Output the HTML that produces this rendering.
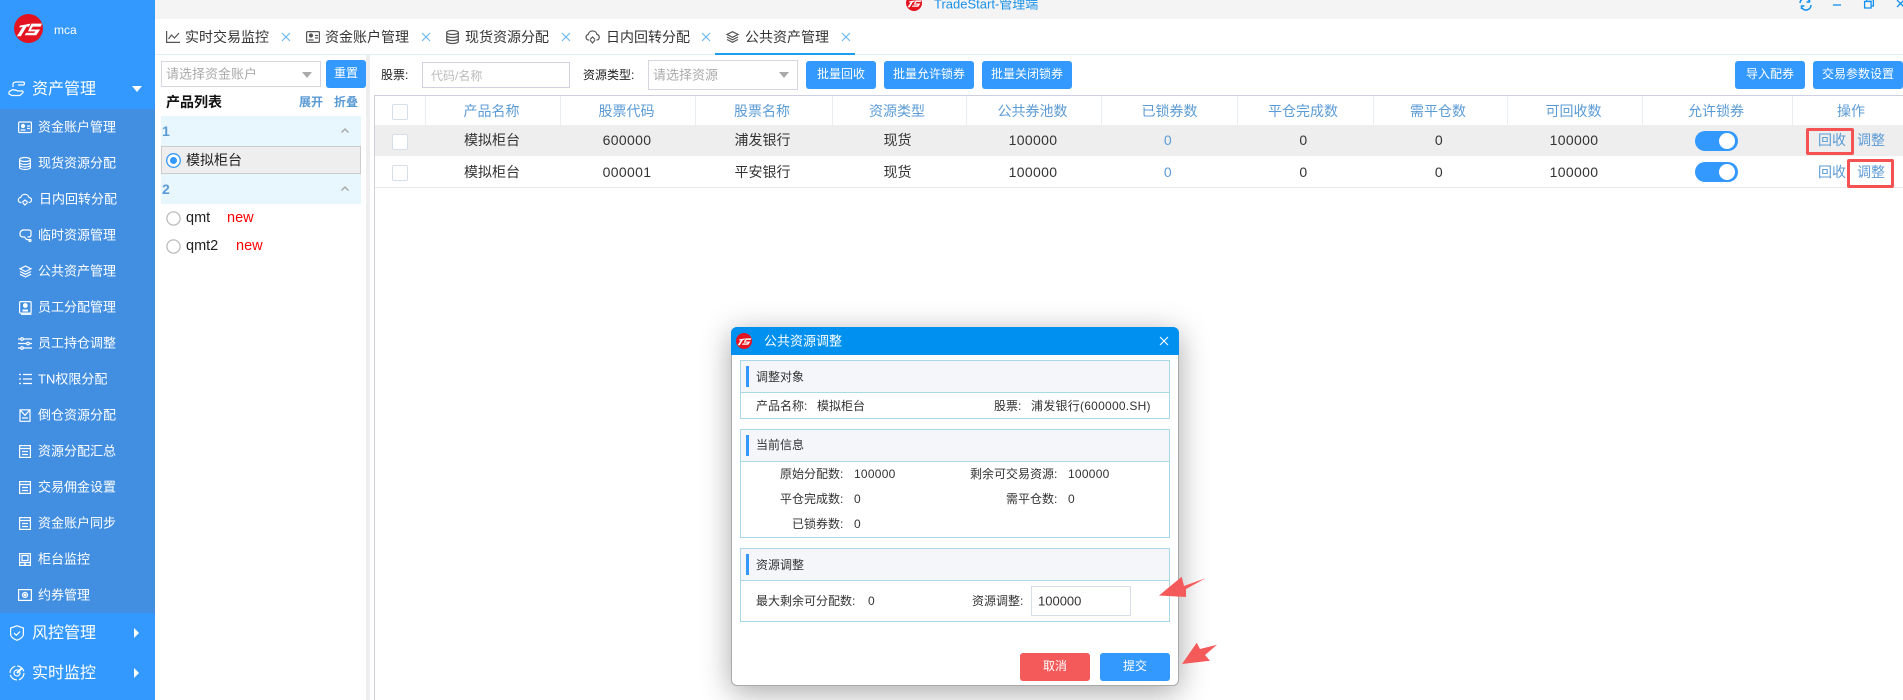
<!DOCTYPE html>
<html lang="zh"><head><meta charset="utf-8"><title>TradeStart-管理端</title>
<style>
*{box-sizing:border-box}
html,body{margin:0;padding:0;width:1903px;height:700px;overflow:hidden;background:#fff;font-family:"Liberation Sans","Noto Sans CJK SC",sans-serif;color:#333}
.a{position:absolute;white-space:nowrap}
.t{position:absolute;white-space:nowrap;transform:translateY(-50%);line-height:1}
svg{position:absolute;overflow:visible}
.sub{font-size:13px;color:#fff;left:38px}
.ms{fill:none;stroke:#fff;stroke-width:1.2}
.ts{fill:none;stroke:#555;stroke-width:1.2}
.tb{font-size:14px;color:#333}
.btn{position:absolute;background:#39f;border-radius:3px;color:#fff;font-size:12px;text-align:center;white-space:nowrap}
.th{position:absolute;top:96px;height:29px;line-height:31px;font-size:14px;color:#5b9bd5;text-align:center;border-right:1px solid #e9eef3}
.td{position:absolute;height:30px;line-height:30px;font-size:14px;color:#333;text-align:center}
.n{letter-spacing:.35px}
.cb{position:absolute;left:392px;width:16px;height:16px;background:#fff;border:1px solid #d5dfea;border-radius:2px}
.tg{position:absolute;left:1695px;width:43px;height:20px;border-radius:10px;background:#39f}
.tg i{position:absolute;right:3px;top:2px;width:16px;height:16px;border-radius:50%;background:#fff}
.sec{position:absolute;left:740px;width:430px;border:1px solid #a9d9e6;background:#fff}
.hd{position:absolute;left:0;top:0;width:428px;height:32px;background:#f4f6f9;border-bottom:1px solid #a9d9e6}
.bar{position:absolute;left:5px;top:5px;width:3px;height:21px;background:#39f}
.f12{font-size:12px;color:#333}
.d{letter-spacing:.25px}
</style></head><body>

<svg width="0" height="0" style="left:0;top:0"><defs><g id="logo"><circle cx="15" cy="15" r="15" fill="#e3141f"/><path d="M6 12 17 10 15.500 13H13L7 23H3L9 13.500 5.500 14zM18 10H29L27.500 13H19.500L17.500 16H27L23 22H11L12.500 19.500H21L22 18H14.500z" fill="#fff"/></g></defs></svg>

<!-- sidebar -->
<div class="a" style="left:0;top:0;width:155px;height:700px;background:#39f"></div>
<div class="a" style="left:0;top:109px;width:155px;height:504px;background:#428fe2"></div>
<svg style="left:14px;top:14px" width="29" height="29" viewBox="0 0 30 30"><use href="#logo"/></svg>
<div class="t" style="left:54px;top:30px;font-size:12px;color:#fff">mca</div>

<svg class="ms" style="left:8px;top:81px" width="18" height="16" viewBox="0 0 18 16"><path d="M5 6V3.500Q5 1 8 1h7q1.500 0 1.500 1.500T15 4H10M1 11q3-3 6-2l3 1h4q1.500 0 1 1.500l-3 3H4L1 13z"/></svg>
<div class="t" style="left:32px;top:90px;font-size:16px;color:#fff">资产管理</div>
<svg style="left:132px;top:86px" width="10" height="6"><path d="M0 0h10L5 6z" fill="#fff"/></svg>

<svg class="ms" style="left:18px;top:121px" width="14" height="13"><rect x=".6" y="1" width="12.800" height="10.500" rx="1"/><circle cx="5" cy="5" r="1.500" fill="#fff"/><path d="M2.500 9h5M9 5h3M9 7.500h3"/></svg>
<div class="t sub" style="top:127px">资金账户管理</div>
<svg class="ms" style="left:19px;top:157px" width="12" height="13"><ellipse cx="6" cy="2.500" rx="5.400" ry="2"/><path d="M.6 2.500v8c0 1 2.400 2 5.400 2s5.400-1 5.400-2v-8M.6 5.500c0 1 2.400 2 5.400 2s5.400-1 5.400-2M.6 8c0 1 2.400 2 5.400 2s5.400-1 5.400-2"/></svg>
<div class="t sub" style="top:163px">现货资源分配</div>
<svg class="ms" style="left:18px;top:193px" width="14" height="13"><path d="M3.500 9.500H3a2.500 2.500 0 0 1-.3-5A4.300 4.300 0 0 1 11 4.500a2.500 2.500 0 0 1 0 5h-.5M4.500 9l2.500-2 2.500 2M4.500 9.500 7 12l2.500-2.500"/></svg>
<div class="t sub" style="top:199px;left:39px">日内回转分配</div>
<svg class="ms" style="left:19px;top:229px" width="13" height="13"><path d="M3 1h7q2 0 2 2v3q0 2-2 2H8.500M5 1C2 1 1 3 1 5s1 3 3 3h1.500l2 2.500 3 .5"/><circle cx="11" cy="11.500" r="1"/></svg>
<div class="t sub" style="top:235px">临时资源管理</div>
<svg class="ms" style="left:19px;top:265px" width="13" height="13"><path d="M6.500 1 12 3.800 6.500 6.600 1 3.800zM1 6.500l5.500 2.800L12 6.500M1 9.200 6.500 12 12 9.200"/></svg>
<div class="t sub" style="top:271px">公共资产管理</div>
<svg class="ms" style="left:19px;top:301px" width="13" height="14"><rect x=".6" y=".6" width="11.500" height="11.500" rx="1"/><circle cx="6.300" cy="4.500" r="1.800" fill="#fff"/><path d="M3.500 9.500h5.500" stroke-width="2"/><path d="M2 13.300h10.500"/></svg>
<div class="t sub" style="top:307px">员工分配管理</div>
<svg class="ms" style="left:18px;top:337px" width="14" height="13"><path d="M0 2h14M0 6.500h14M0 11h14"/><circle cx="4" cy="2" r="1.300" fill="#428fe2"/><circle cx="10" cy="6.500" r="1.300" fill="#428fe2"/><circle cx="4" cy="11" r="1.300" fill="#428fe2"/></svg>
<div class="t sub" style="top:343px">员工持仓调整</div>
<svg class="ms" style="left:19px;top:373px" width="13" height="12"><path d="M4 1.500h9M4 6h9M4 10.500h9M0 1.500h2M0 6h2M0 10.500h2"/></svg>
<div class="t sub" style="top:379px">TN权限分配</div>
<svg class="ms" style="left:19px;top:409px" width="12" height="13"><path d="M1 .8h10v11.500H1zM1 .8l5 5.500 5-5.500M3 9h6"/></svg>
<div class="t sub" style="top:415px">倒仓资源分配</div>
<svg class="ms" style="left:19px;top:445px" width="12" height="13"><rect x=".6" y=".6" width="10.800" height="11.800"/><path d="M.6 3.500h10.800M3 6.500h6M3 9.500h6"/></svg>
<div class="t sub" style="top:451px">资源分配汇总</div>
<svg class="ms" style="left:19px;top:481px" width="12" height="13"><rect x=".6" y=".6" width="10.800" height="11.800"/><path d="M.6 3.500h10.800M3 6.500h6M3 9.500h6"/></svg>
<div class="t sub" style="top:487px">交易佣金设置</div>
<svg class="ms" style="left:19px;top:517px" width="12" height="13"><rect x=".6" y=".6" width="10.800" height="11.800"/><path d="M.6 3.500h10.800M3 6.500h6M3 9.500h6"/></svg>
<div class="t sub" style="top:523px">资金账户同步</div>
<svg class="ms" style="left:19px;top:553px" width="12" height="13"><rect x=".6" y=".6" width="10.800" height="11.800"/><rect x="3" y="2.500" width="6" height="5"/><path d="M.6 9.500h10.800M5 11h2"/></svg>
<div class="t sub" style="top:559px">柜台监控</div>
<svg class="ms" style="left:18px;top:589px" width="14" height="12"><rect x=".6" y=".6" width="12.800" height="10.800"/><circle cx="7" cy="6" r="2.500"/><circle cx="7" cy="6" r=".8" fill="#fff"/></svg>
<div class="t sub" style="top:595px">约券管理</div>

<svg class="ms" style="left:10px;top:625px" width="14" height="16"><path d="M7 .8 13.400 3v6.500Q13 13 7 15.300 1 13 .6 9.500V3zM4 8l2.300 2.300L10 6.500"/></svg>
<div class="t" style="left:32px;top:634px;font-size:16px;color:#fff">风控管理</div>
<svg style="left:134px;top:628px" width="5" height="10"><path d="M0 0l5 5-5 5z" fill="#fff"/></svg>
<svg class="ms" style="left:9px;top:665px" width="16" height="16"><circle cx="8" cy="8" r="7" stroke-dasharray="9 2"/><circle cx="8" cy="8" r="3"/><path d="M8 8l4.500-4.500" stroke-width="2"/></svg>
<div class="t" style="left:32px;top:674px;font-size:16px;color:#fff">实时监控</div>
<svg style="left:134px;top:668px" width="5" height="10"><path d="M0 0l5 5-5 5z" fill="#fff"/></svg>

<!-- title bar -->
<div class="a" style="left:155px;top:0;width:1748px;height:19px;background:#f4f4f4"></div>
<svg style="left:906px;top:-5px" width="16" height="16" viewBox="0 0 30 30"><use href="#logo"/></svg>
<div class="t" style="left:934px;top:4px;font-size:13px;color:#1a90e8">TradeStart-管理端</div>
<svg style="left:1799px;top:-1px" width="13" height="11" fill="none" stroke="#1090f0" stroke-width="1.500"><path d="M1 4a5 5 0 0 1 9-2.500M12 6a5 5 0 0 1-9 3M10.500 0v3h-3M2.500 10V7h3"/></svg>
<svg style="left:1833px;top:4px" width="8" height="2"><path d="M0 1h8" stroke="#1090f0" stroke-width="1.300"/></svg>
<svg style="left:1864px;top:-1px" width="10" height="10" fill="none" stroke="#1090f0" stroke-width="1.300"><path d="M.6 2.500h6.500v6.500H.6zM2.500 2.500V.6H9.400V7H7"/></svg>
<svg style="left:1897px;top:0" width="8" height="8" fill="none" stroke="#1090f0" stroke-width="1.300"><path d="M0 0l7 7M7 0 0 7"/></svg>

<!-- tabs -->
<div class="a" style="left:155px;top:54px;width:1748px;height:1px;background:#dff0fa"></div>
<svg class="ts" style="left:166px;top:31px" width="14" height="12"><path d="M.6 0v11.400H14M2.500 8l3-4 3 3 4.500-5"/></svg>
<div class="t tb" style="left:185px;top:37px">实时交易监控</div>
<svg style="left:282px;top:33px" width="8" height="8" stroke="#69b7ee" stroke-width="1.100"><path d="M0 0l8 8M8 0 0 8"/></svg>
<svg class="ts" style="left:306px;top:31px" width="14" height="12"><rect x=".6" y=".6" width="12.800" height="10.800" rx="1"/><circle cx="5" cy="4.500" r="1.500" fill="#555"/><path d="M2.500 9h5M9 4.500h3M9 7h3"/></svg>
<div class="t tb" style="left:325px;top:37px">资金账户管理</div>
<svg style="left:422px;top:33px" width="8" height="8" stroke="#69b7ee" stroke-width="1.100"><path d="M0 0l8 8M8 0 0 8"/></svg>
<svg class="ts" style="left:446px;top:30px" width="13" height="14"><ellipse cx="6.500" cy="2.500" rx="5.800" ry="2"/><path d="M.7 2.500v9c0 1 2.600 2 5.800 2s5.800-1 5.800-2v-9M.7 5.500c0 1 2.600 2 5.800 2s5.800-1 5.800-2M.7 8.500c0 1 2.600 2 5.800 2s5.800-1 5.800-2"/></svg>
<div class="t tb" style="left:465px;top:37px">现货资源分配</div>
<svg style="left:562px;top:33px" width="8" height="8" stroke="#69b7ee" stroke-width="1.100"><path d="M0 0l8 8M8 0 0 8"/></svg>
<svg class="ts" style="left:585px;top:30px" width="15" height="14"><path d="M4 10H3.500a2.800 2.800 0 0 1-.3-5.500A4.500 4.500 0 0 1 12 4.500a2.800 2.800 0 0 1 0 5.500h-.5M5 9.500l2.500-2.500 2.500 2.500M5 10l2.500 3 2.500-3"/></svg>
<div class="t tb" style="left:606px;top:37px">日内回转分配</div>
<svg style="left:702px;top:33px" width="8" height="8" stroke="#69b7ee" stroke-width="1.100"><path d="M0 0l8 8M8 0 0 8"/></svg>
<svg class="ts" style="left:726px;top:31px" width="13" height="12" stroke="#333"><path d="M6.500.7 12 3.500 6.500 6.300 1 3.500zM1 6l5.500 2.800L12 6M1 8.500l5.500 2.800L12 8.500"/></svg>
<div class="t tb" style="left:745px;top:37px">公共资产管理</div>
<svg style="left:842px;top:33px" width="8" height="8" stroke="#69b7ee" stroke-width="1.100"><path d="M0 0l8 8M8 0 0 8"/></svg>
<div class="a" style="left:715px;top:53px;width:140px;height:2px;background:#1a9fee"></div>

<!-- left panel -->
<div class="a" style="left:366px;top:55px;width:4px;height:645px;background:#eee"></div>
<div class="a" style="left:161px;top:61px;width:160px;height:26px;border:1px solid #d6d6e2"></div>
<div class="t" style="left:166px;top:74px;font-size:13px;color:#aaa">请选择资金账户</div>
<svg style="left:302px;top:72px" width="10" height="6"><path d="M0 0h10L5 6z" fill="#aaa"/></svg>
<div class="btn" style="left:326px;top:60px;width:40px;height:28px;line-height:27px">重置</div>
<div class="t" style="left:166px;top:102px;font-size:14px;font-weight:bold;color:#111">产品列表</div>
<div class="t" style="left:299px;top:102px;font-size:12px;font-weight:bold;color:#5b9bd5">展开</div>
<div class="t" style="left:334px;top:102px;font-size:12px;font-weight:bold;color:#5b9bd5">折叠</div>
<div class="a" style="left:161px;top:116px;width:200px;height:30px;background:#e8f6fd"></div>
<div class="t" style="left:162px;top:131px;font-size:14px;font-weight:bold;color:#5b9bd5">1</div>
<svg style="left:341px;top:128px" width="8" height="5" fill="none" stroke="#aaa" stroke-width="1.500"><path d="M.5 4.500 4 1l3.500 3.500"/></svg>
<div class="a" style="left:161px;top:146px;width:200px;height:28px;background:#eee;border:1px solid #ccc"></div>
<svg style="left:166px;top:153px" width="15" height="15"><circle cx="7.500" cy="7.500" r="6.800" fill="#fff" stroke="#39f" stroke-width="1.300"/><circle cx="7.500" cy="7.500" r="3.500" fill="#39f"/></svg>
<div class="t" style="left:186px;top:160px;font-size:14px;color:#222">模拟柜台</div>
<div class="a" style="left:161px;top:174px;width:200px;height:30px;background:#e8f6fd"></div>
<div class="t" style="left:162px;top:189px;font-size:14px;font-weight:bold;color:#5b9bd5">2</div>
<svg style="left:341px;top:186px" width="8" height="5" fill="none" stroke="#aaa" stroke-width="1.500"><path d="M.5 4.500 4 1l3.500 3.500"/></svg>
<svg style="left:166px;top:210.500px" width="15" height="15"><circle cx="7.500" cy="7.500" r="6.600" fill="#fff" stroke="#bbb" stroke-width="1.300"/></svg>
<div class="t" style="left:186px;top:218px;font-size:14.500px;color:#222">qmt</div>
<div class="t" style="left:227px;top:218px;font-size:14.500px;color:#f00">new</div>
<svg style="left:166px;top:239px" width="15" height="15"><circle cx="7.500" cy="7.500" r="6.600" fill="#fff" stroke="#bbb" stroke-width="1.300"/></svg>
<div class="t" style="left:186px;top:246px;font-size:14.500px;color:#222">qmt2</div>
<div class="t" style="left:236px;top:246px;font-size:14.500px;color:#f00">new</div>

<!-- toolbar -->
<div class="t f12" style="left:381px;top:75px;color:#222">股票:</div>
<div class="a" style="left:422px;top:62px;width:148px;height:26px;border:1px solid #d0d0e0"></div>
<div class="t" style="left:431px;top:76px;font-size:12px;color:#bbb">代码/名称</div>
<div class="t f12" style="left:583px;top:75px;color:#222">资源类型:</div>
<div class="a" style="left:648px;top:60px;width:150px;height:30px;border:1px solid #d6d6e2"></div>
<div class="t" style="left:653px;top:75px;font-size:13px;color:#aaa">请选择资源</div>
<svg style="left:779px;top:72px" width="10" height="6"><path d="M0 0h10L5 6z" fill="#aaa"/></svg>
<div class="btn" style="left:806px;top:61px;width:70px;height:28px;line-height:27px">批量回收</div>
<div class="btn" style="left:884px;top:61px;width:90px;height:28px;line-height:27px">批量允许锁券</div>
<div class="btn" style="left:982px;top:61px;width:90px;height:28px;line-height:27px">批量关闭锁券</div>
<div class="btn" style="left:1735px;top:61px;width:70px;height:28px;line-height:27px">导入配券</div>
<div class="btn" style="left:1813px;top:61px;width:90px;height:28px;line-height:27px">交易参数设置</div>

<!-- table -->
<div class="a" style="left:374px;top:95px;width:1529px;height:1px;background:#cfcfe0"></div>
<div class="a" style="left:374px;top:95px;width:1px;height:605px;background:#cfcfe0"></div>
<div class="a" style="left:375px;top:125px;width:1528px;height:31px;background:#eee"></div>
<div class="a" style="left:375px;top:187px;width:1528px;height:1px;background:#e8e8e8"></div>
<div class="th" style="left:375px;width:51px"></div>
<div class="th" style="left:426px;width:135px;padding-right:3px">产品名称</div>
<div class="th" style="left:561px;width:135px;padding-right:3px">股票代码</div>
<div class="th" style="left:696px;width:137px;padding-right:4px">股票名称</div>
<div class="th" style="left:833px;width:134px;padding-right:5px">资源类型</div>
<div class="th" style="left:967px;width:135px;padding-right:3px">公共券池数</div>
<div class="th" style="left:1102px;width:136px">已锁券数</div>
<div class="th" style="left:1238px;width:136px;padding-right:5px">平仓完成数</div>
<div class="th" style="left:1374px;width:134px;padding-right:5px">需平仓数</div>
<div class="th" style="left:1508px;width:135px;padding-right:3px">可回收数</div>
<div class="th" style="left:1643px;width:150px;padding-right:3px">允许锁券</div>
<div class="th" style="left:1793px;width:110px;border:0;padding-left:6px">操作</div>

<div class="cb" style="top:104px"></div>
<div class="cb" style="top:134px"></div>
<div class="cb" style="top:165px"></div>

<div class="td" style="left:426px;top:125px;width:132px">模拟柜台</div>
<div class="td n" style="left:561px;top:125px;width:132px">600000</div>
<div class="td" style="left:696px;top:125px;width:133px">浦发银行</div>
<div class="td" style="left:833px;top:125px;width:129px">现货</div>
<div class="td n" style="left:966px;top:125px;width:134px">100000</div>
<div class="td n" style="left:1101px;top:125px;width:134px;color:#5b9bd5">0</div>
<div class="td n" style="left:1237px;top:125px;width:133px">0</div>
<div class="td n" style="left:1373px;top:125px;width:132px">0</div>
<div class="td n" style="left:1508px;top:125px;width:132px">100000</div>
<div class="tg" style="top:131px"><i></i></div>
<div class="td" style="left:1818px;top:125px;color:#5b9bd5">回收</div>
<div class="td" style="left:1857px;top:125px;color:#5b9bd5">调整</div>

<div class="td" style="left:426px;top:157px;width:132px">模拟柜台</div>
<div class="td n" style="left:561px;top:157px;width:132px">000001</div>
<div class="td" style="left:696px;top:157px;width:133px">平安银行</div>
<div class="td" style="left:833px;top:157px;width:129px">现货</div>
<div class="td n" style="left:966px;top:157px;width:134px">100000</div>
<div class="td n" style="left:1101px;top:157px;width:134px;color:#5b9bd5">0</div>
<div class="td n" style="left:1237px;top:157px;width:133px">0</div>
<div class="td n" style="left:1373px;top:157px;width:132px">0</div>
<div class="td n" style="left:1508px;top:157px;width:132px">100000</div>
<div class="tg" style="top:162px"><i></i></div>
<div class="td" style="left:1818px;top:157px;color:#5b9bd5">回收</div>
<div class="td" style="left:1857px;top:157px;color:#5b9bd5">调整</div>

<div class="a" style="left:1806px;top:128px;width:48px;height:27px;border:3px solid #f55353;border-radius:2px"></div>
<div class="a" style="left:1847px;top:159px;width:47px;height:29px;border:3px solid #f55353;border-radius:2px"></div>

<!-- modal -->
<div class="a" style="left:731px;top:327px;width:448px;height:359px;background:#fff;border:1px solid #aaa;border-radius:6px;box-shadow:0 6px 30px rgba(0,0,0,.35)"></div>
<div class="a" style="left:731px;top:327px;width:448px;height:28px;background:#0090f0;border-radius:6px 6px 0 0"></div>
<svg style="left:736px;top:333px" width="16" height="16" viewBox="0 0 30 30"><use href="#logo"/></svg>
<div class="t" style="left:764px;top:341px;font-size:13px;color:#fff">公共资源调整</div>
<svg style="left:1160px;top:337px" width="8" height="8" stroke="#fff" stroke-width="1.100"><path d="M0 0l8 8M8 0 0 8"/></svg>

<div class="sec" style="top:360px;height:59px"><div class="hd"></div><div class="bar"></div></div>
<div class="t f12" style="left:756px;top:377px">调整对象</div>
<div class="t f12" style="left:756px;top:406px">产品名称:</div>
<div class="t f12" style="left:817px;top:406px">模拟柜台</div>
<div class="t f12" style="left:994px;top:406px">股票:</div>
<div class="t f12 d" style="left:1031px;top:406px">浦发银行(600000.SH)</div>

<div class="sec" style="top:429px;height:109px"><div class="hd"></div><div class="bar"></div></div>
<div class="t f12" style="left:756px;top:445px">当前信息</div>
<div class="t f12" style="left:780px;top:474px">原始分配数:</div>
<div class="t f12 d" style="left:854px;top:474px">100000</div>
<div class="t f12" style="left:970px;top:474px">剩余可交易资源:</div>
<div class="t f12 d" style="left:1068px;top:474px">100000</div>
<div class="t f12" style="left:780px;top:499px">平仓完成数:</div>
<div class="t f12" style="left:854px;top:499px">0</div>
<div class="t f12" style="left:1006px;top:499px">需平仓数:</div>
<div class="t f12" style="left:1068px;top:499px">0</div>
<div class="t f12" style="left:792px;top:524px">已锁券数:</div>
<div class="t f12" style="left:854px;top:524px">0</div>

<div class="sec" style="top:548px;height:74px"><div class="hd"></div><div class="bar"></div></div>
<div class="t f12" style="left:756px;top:565px">资源调整</div>
<div class="t f12" style="left:756px;top:601px">最大剩余可分配数:</div>
<div class="t f12" style="left:868px;top:601px">0</div>
<div class="t f12" style="left:972px;top:601px">资源调整:</div>
<div class="a" style="left:1031px;top:586px;width:100px;height:30px;border:1px solid #d7dde8"></div>
<div class="t" style="left:1038px;top:601px;font-size:13px;color:#333">100000</div>

<div class="btn" style="left:1020px;top:653px;width:70px;height:28px;line-height:27px;background:#f55a5a">取消</div>
<div class="btn" style="left:1100px;top:653px;width:70px;height:28px;line-height:27px">提交</div>

<svg style="left:0;top:0" width="1903" height="700"><polygon points="1159,595.500 1181.700,576.700 1184,586 1206,578 1186,589 1186,597" fill="#f55a5a"/><polygon points="1182,664 1196.700,642.700 1200,649 1217,644.700 1205,655 1210,660.700" fill="#f55a5a"/></svg>
</body></html>
